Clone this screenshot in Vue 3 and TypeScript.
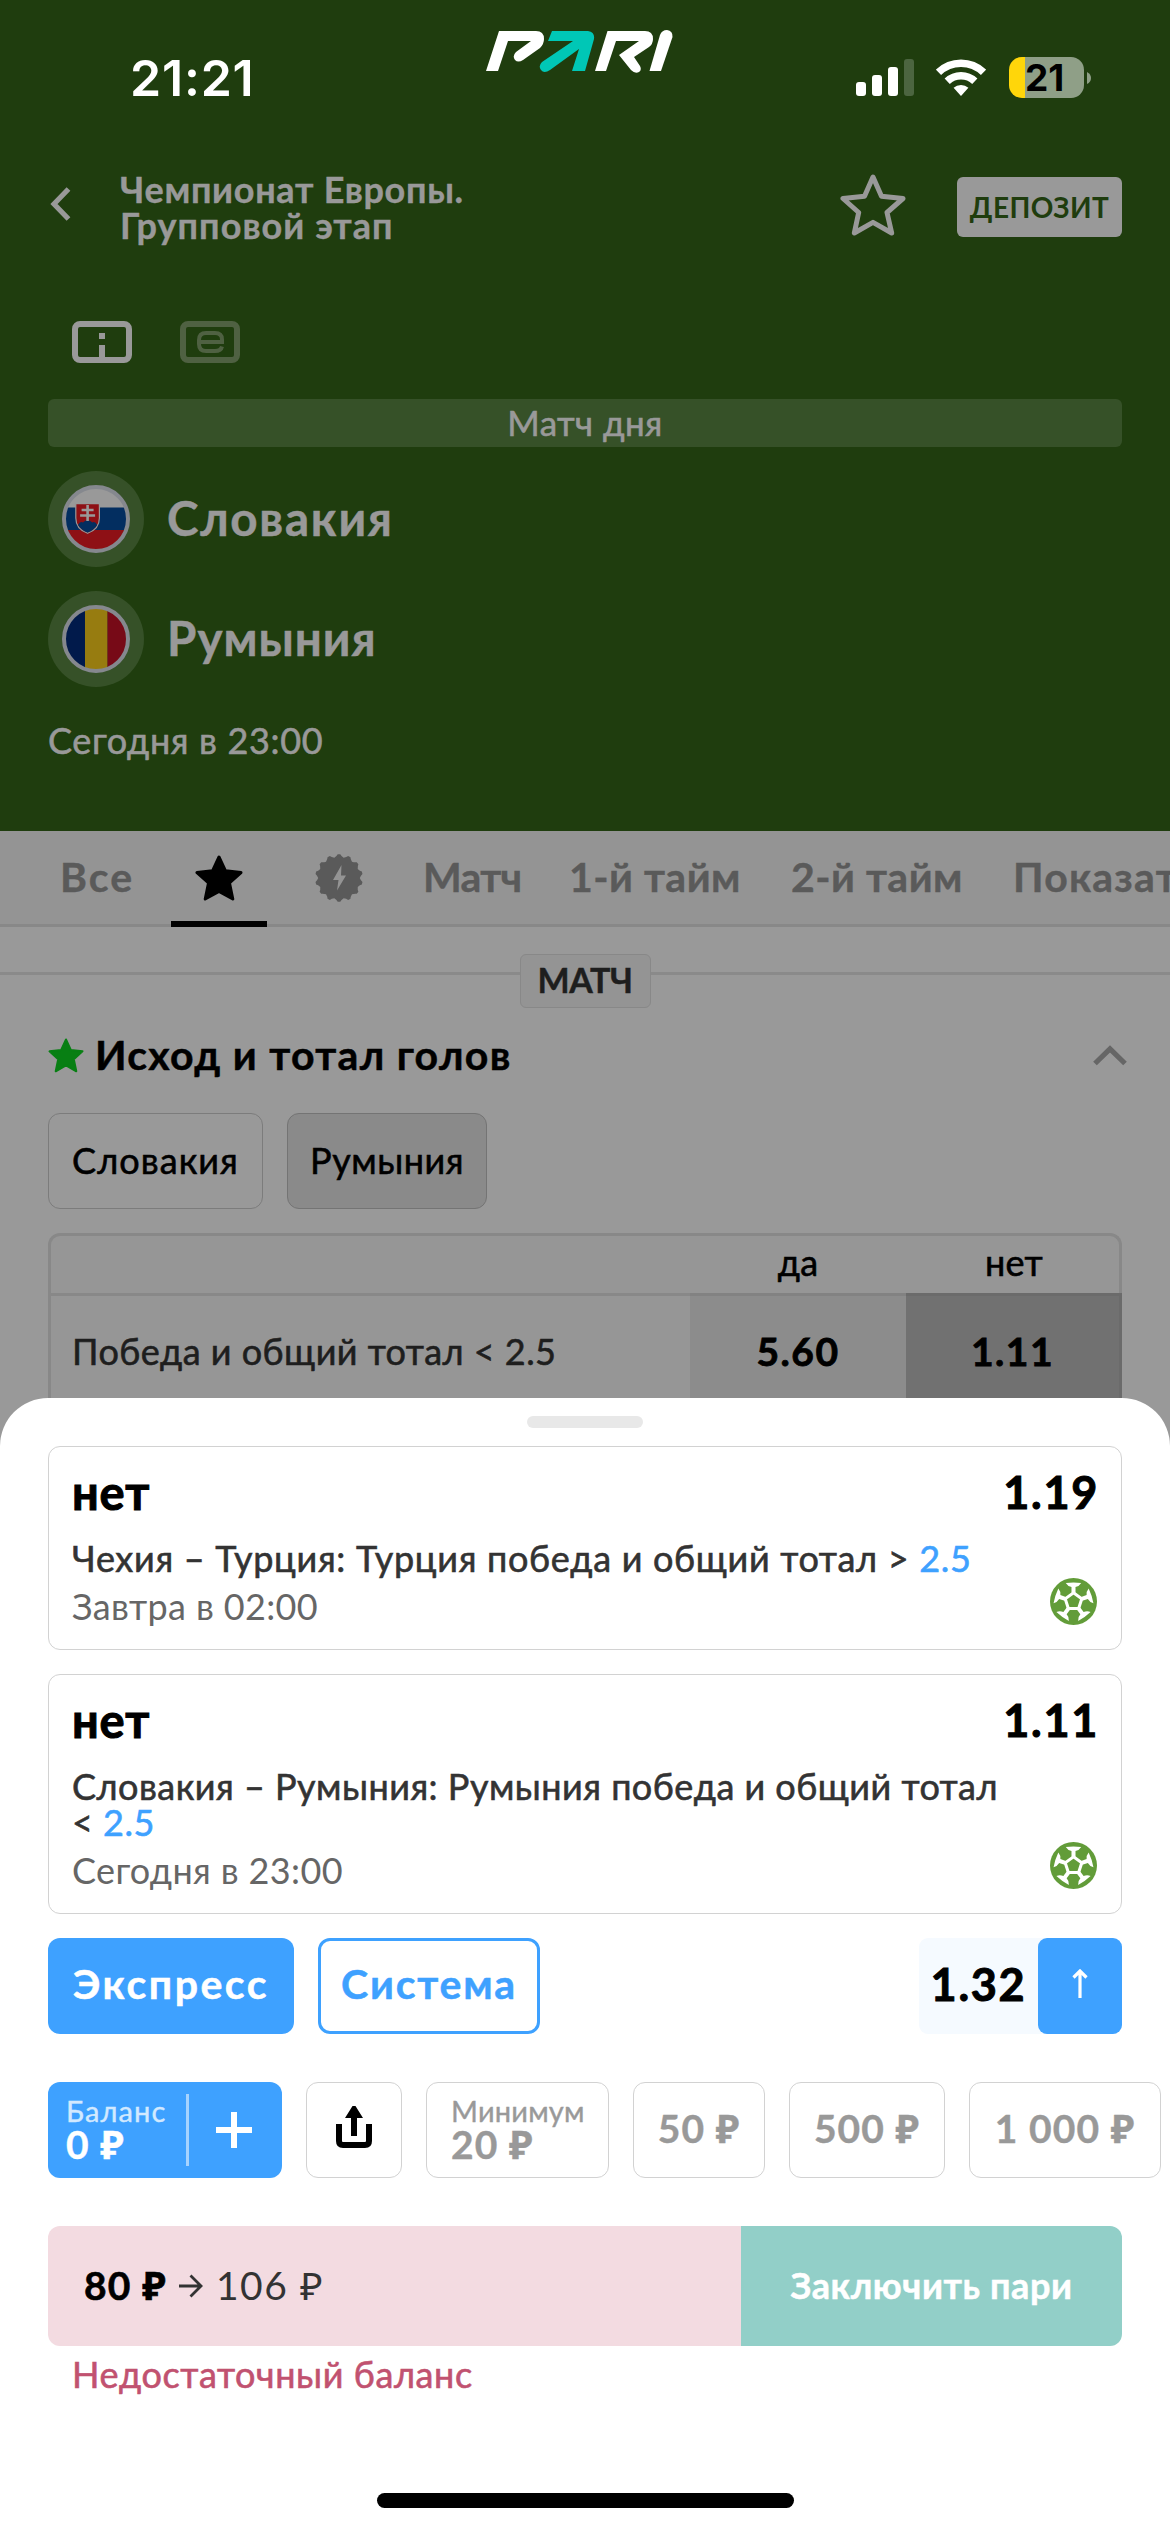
<script setup lang="ts">
interface Tab {
  id: string
  label?: string
  icon?: 'star' | 'boost'
  active?: boolean
}
interface Bet {
  id: string
  outcome: string
  odds: string
  event: string
  total: string
  time: string
}

const tabs: Tab[] = [
  { id: 'all', label: 'Все' },
  { id: 'favorite', icon: 'star', active: true },
  { id: 'boost', icon: 'boost' },
  { id: 'match', label: 'Матч' },
  { id: 'half1', label: '1-й тайм' },
  { id: 'half2', label: '2-й тайм' },
  { id: 'stats', label: 'Показатели' },
]

const bets: Bet[] = [
  { id: 'cze-tur', outcome: 'нет', odds: '1.19', event: 'Чехия – Турция: Турция победа и общий тотал >', total: '2.5', time: 'Завтра в 02:00' },
  { id: 'svk-rou', outcome: 'нет', odds: '1.11', event: 'Словакия – Румыния: Румыния победа и общий тотал <', total: '2.5', time: 'Сегодня в 23:00' },
]

const stakes = [
  { value: '50 ₽', cls: 's50' },
  { value: '500 ₽', cls: 's500' },
  { value: '1 000 ₽', cls: 's1000' },
]

const spokes = [0, 72, 144, 216, 288]

// Scalloped outline of the boost badge
const badgePath = (() => {
  const teeth = 14
  const parts: string[] = []
  for (let i = 0; i < teeth; i++) {
    const point = (angle: number, radius: number) =>
      `${(24 + radius * Math.sin(angle)).toFixed(2)} ${(24 - radius * Math.cos(angle)).toFixed(2)}`
    const step = (Math.PI * 2) / teeth
    const a = i * step
    if (i === 0) parts.push(`M${point(a - step / 2, 20.8)}`)
    parts.push(`Q${point(a - step * 0.22, 22)} ${point(a - step * 0.12, 23.8)}`)
    parts.push(`L${point(a + step * 0.12, 23.8)}`)
    parts.push(`Q${point(a + step * 0.22, 22)} ${point(a + step / 2, 20.8)}`)
  }
  return parts.join('') + 'Z'
})()
</script>

<template>
  <div class="screen">
    <header class="header">
      <div class="status">
        <span class="clock">21:21</span>
        <svg class="logo" viewBox="0 0 188 44">
          <path fill="#fff" d="M0 42 13 2h37q8 0 8 8 0 5-4 9L37 31q-5 3-8 0-3-4 1-8L45 12H22L12 42z" />
          <path fill="#00c7b6" d="M66 2h36q7 1 6 8L99 42H86l7-22-29 21q-6 4-9 0-3-4 1-8l31-21H62z" />
          <path fill="#fff" d="M109 42 121.500 2H159q8 0 8 8 0 5-4 8l-15 10 6 9q2 4-1 6-4 2-8-2l-12-15L153 12h-23l-10 30z" />
          <path fill="#fff" d="M163.500 42 174 6q2-5 7-5 6 1 5.500 7L175 42z" />
        </svg>
        <div class="indicators">
          <svg class="signal" viewBox="0 0 58 37">
            <rect x="0" y="23" width="10" height="14" rx="3" fill="#fff" />
            <rect x="16" y="16" width="10" height="21" rx="3" fill="#fff" />
            <rect x="32" y="8" width="10" height="29" rx="3" fill="#fff" />
            <rect x="48" y="0" width="10" height="37" rx="3" fill="#4c6540" />
          </svg>
          <svg class="wifi" viewBox="0 0 50 37">
            <g fill="none" stroke="#fff" stroke-width="7.500">
              <path d="M2.500 13.300a32.500 32.500 0 0 1 45 0" />
              <path d="M11.200 22.300a20 20 0 0 1 27.600 0" />
            </g>
            <path fill="#fff" d="M17.600 28.800a11 11 0 0 1 14.800 0L25 37z" />
          </svg>
          <div class="battery"><span>21</span></div>
          <svg class="nub" viewBox="0 0 4 12"><path d="M0 0q4 2 4 6t-4 6z" fill="#8f9f87" /></svg>
        </div>
      </div>

      <div class="nav">
        <svg class="back" viewBox="0 0 21 34"><path d="M18.500 2 4 17l14.500 15" fill="none" stroke="#999" stroke-width="5.200" /></svg>
        <h1 class="league"><span class="l1">Чемпионат Европы.</span><br /><span class="l2">Групповой этап</span></h1>
        <svg class="fav" viewBox="0 0 66 62">
          <path d="M33 3 41.500 22.300 63 24.500 47 38.500 51.700 59 33 48.300 14.300 59 18.700 38.500 3 24.500 24.500 22.300z" fill="none" stroke="#999" stroke-width="5" stroke-linejoin="round" />
        </svg>
        <button class="deposit">ДЕПОЗИТ</button>
      </div>

      <div class="modes">
        <svg viewBox="0 0 60 42">
          <rect x="3" y="3" width="54" height="36" rx="5" fill="none" stroke="#999" stroke-width="6" />
          <path d="M27 12h6v6h-6zM27 24h6v13h-6z" fill="#999" />
        </svg>
        <svg viewBox="0 0 60 42">
          <rect x="3" y="3" width="54" height="36" rx="5" fill="none" stroke="#4f6142" stroke-width="6" />
          <path d="M19 21h23v-2.500q0-6.500-7-6.500h-9q-7 0-7 7v4q0 7 7 7h9q6 0 7-4.500" fill="none" stroke="#4f6142" stroke-width="4" />
        </svg>
      </div>

      <div class="banner">Матч дня</div>

      <div class="team">
        <div class="crest">
          <svg viewBox="0 0 68 68">
            <clipPath id="round"><circle cx="34" cy="34" r="31" /></clipPath>
            <g clip-path="url(#round)">
              <path fill="#999" d="M0 0h68v23H0z" />
              <path fill="#032e60" d="M0 22.500h68V45H0z" />
              <path fill="#8e1015" d="M0 45h68v23H0z" />
              <path fill="#8e1015" stroke="#999" stroke-width="1.200" d="M13.800 18.700h23.600V33q0 11-11.800 15.300Q13.800 44 13.800 33z" />
              <path fill="#032e60" d="M16 40q2-4 5-2.500 4.600-5 9.200 0 3-1.500 5 2.500-3 5-9.600 7.600Q19 45 16 40z" />
              <path stroke="#999" stroke-width="2.600" d="M25.600 20v16M19.600 25h12M18.100 30.500h15" />
            </g>
            <circle cx="34" cy="34" r="32" fill="none" stroke="#85888e" stroke-width="4" />
          </svg>
        </div>
        <span class="tn1">Словакия</span>
      </div>
      <div class="team">
        <div class="crest">
          <svg viewBox="0 0 68 68">
            <g clip-path="url(#round)">
              <path fill="#011a4b" d="M0 0h23v68H0z" />
              <path fill="#977c10" d="M23 0h22.500v68H23z" />
              <path fill="#770a17" d="M45.500 0H68v68H45.500z" />
            </g>
            <circle cx="34" cy="34" r="32" fill="none" stroke="#85888e" stroke-width="4" />
          </svg>
        </div>
        <span class="tn2">Румыния</span>
      </div>
      <div class="kickoff">Сегодня в 23:00</div>
    </header>

    <nav class="tabs">
      <div v-for="t in tabs" :key="t.id" class="tab" :class="[t.id, { active: t.active }]">
        <template v-if="t.label">{{ t.label }}</template>
        <svg v-else-if="t.icon === 'star'" class="tab-star" viewBox="0 0 48 46">
          <path d="M24 2 30.500 15.800 46 17.600 34.500 28 37.800 44 24 36.500 10.200 44 13.500 28 2 17.600 17.500 15.800z" fill="#000" stroke="#000" stroke-width="3" stroke-linejoin="round" />
        </svg>
        <svg v-else class="tab-boost" viewBox="0 0 48 48">
          <path :d="badgePath" fill="#5a5a5a" />
          <path d="M26.500 11 18 26h5.500l-1.500 10.500L31 21.500h-5z" fill="#949494" />
        </svg>
      </div>
    </nav>

    <main class="market">
      <div class="divider"><span>МАТЧ</span></div>
      <div class="market-head">
        <svg class="green-star" viewBox="0 0 36 35">
          <path d="M18 1.500 22.800 12 34.500 13.300 25.800 21.200 28.300 33.300 18 27.300 7.700 33.300 10.200 21.200 1.500 13.300 13.200 12z" fill="#087f13" stroke="#087f13" stroke-width="2" stroke-linejoin="round" />
        </svg>
        <h2>Исход и тотал голов</h2>
        <svg class="collapse" viewBox="0 0 34 21"><path d="M2 18.500 17 3.800 32 18.500" fill="none" stroke="#666" stroke-width="5.200" /></svg>
      </div>
      <div class="chips">
        <div class="chip c1">Словакия</div>
        <div class="chip c2 selected">Румыния</div>
      </div>
      <div class="table">
        <div class="thead"><span></span><span>да</span><span>нет</span></div>
        <div class="trow">
          <span class="label">Победа и общий тотал &lt; 2.5</span>
          <span class="odd">5.60</span>
          <span class="odd picked">1.11</span>
        </div>
      </div>
    </main>

    <section class="sheet">
      <div class="handle"></div>
      <article v-for="b in bets" :key="b.id" class="card" :class="b.id">
        <div class="card-top"><span class="outcome">{{ b.outcome }}</span><span class="odds">{{ b.odds }}</span></div>
        <div class="card-body">
          <div class="card-text">
            <div class="event">{{ b.event }} <em>{{ b.total }}</em></div>
            <div class="when">{{ b.time }}</div>
          </div>
          <svg class="ball" viewBox="0 0 140 140">
            <circle cx="70" cy="70" r="70" fill="#629c39" />
            <path d="M70 44 94.700 62 85.300 91 54.700 91 45.300 62z" fill="none" stroke="#fff" stroke-width="9" />
            <g v-for="a in spokes" :key="a" :transform="`rotate(${a} 70 70)`" fill="#fff">
              <path d="M47 15q23-3 46 0-6 10-17 12v17H64V27q-11-2-17-12z" />
            </g>
          </svg>
        </div>
      </article>

      <div class="modes-row">
        <button class="mode express">Экспресс</button>
        <button class="mode system">Система</button>
        <div class="total">
          <span class="coef">1.32</span>
          <button class="expand">
            <svg viewBox="0 0 16 30"><path d="M8 29V3M1.500 8.500 8 2l6.500 6.500" fill="none" stroke="#fff" stroke-width="3.200" /></svg>
          </button>
        </div>
      </div>

      <div class="stakes">
        <div class="balance">
          <div class="balance-text"><small>Баланс</small><b>0 ₽</b></div>
          <i class="bar"></i>
          <svg class="plus" viewBox="0 0 36 36"><path d="M18 0v36M0 18h36" stroke="#fff" stroke-width="6" /></svg>
        </div>
        <button class="stake share">
          <svg viewBox="0 0 36 42">
            <path d="M3 18v17q0 4 4 4h22q4 0 4-4V18" fill="none" stroke="#000" stroke-width="6" />
            <path d="M16.500 0h3L27 12h-6v18h-6V12H9z" fill="#000" />
          </svg>
        </button>
        <button class="stake min"><small>Минимум</small><b>20 ₽</b></button>
        <button v-for="s in stakes" :key="s.value" class="stake" :class="s.cls"><b>{{ s.value }}</b></button>
      </div>

      <div class="submit">
        <div class="amount">
          <b>80 ₽</b>
          <svg viewBox="0 0 24 24"><path d="M0 12h22M11.500 1.500 22 12 11.500 22.500" fill="none" stroke="#333" stroke-width="2.800" /></svg>
          <span>106 ₽</span>
        </div>
        <button class="place">Заключить пари</button>
      </div>
      <div class="error">Недостаточный баланс</div>
      <div class="home"></div>
    </section>
  </div>
</template>

<style>
body { margin: 0; }
</style>

<style scoped>
.screen {
  position: relative;
  width: 1170px;
  height: 2532px;
  overflow: hidden;
  background: #999;
  font-family: Lato, "Noto Sans", sans-serif;
  font-size: 36px;
  line-height: 36px;
  color: #000;
}
* { box-sizing: border-box; }
svg { display: block; flex: none; }
button { font: inherit; border: 0; padding: 0; margin: 0; background: none; letter-spacing: inherit; }
h1, h2 { margin: 0; font-weight: 700; }
b { font-weight: 700; }

.header { height: 831px; background: #1f3d0e; color: #999; padding: 0 48px; }
.status { display: grid; grid-template-columns: 438px 188px 1fr; height: 141px; margin-right: -48px; }
.clock { font: 600 50px/60px Inter, sans-serif; letter-spacing: .8px; color: #fff; padding: 48px 0 0 82px; }
.logo { width: 188px; height: 44px; margin-top: 29px; }
.indicators { display: flex; align-items: center; height: 41px; margin-top: 57px; padding-left: 182px; }
.signal { width: 58px; height: 37px; }
.wifi { width: 50px; height: 37px; margin: 0 23px 0 22px; }
.battery { width: 75px; height: 41px; border-radius: 13px; background: linear-gradient(90deg, #ffd60a 16px, #8f9f87 16px); color: #000; font: 700 37px/41px Inter, sans-serif; padding-left: 16px; }
.nub { width: 4px; height: 12px; margin-left: 3px; }

.nav { display: flex; align-items: center; height: 132px; }
.back { width: 21px; height: 34px; margin: 0 49px 7px 2px; }
.league { flex: 1; font-size: 36px; line-height: 36px; -webkit-text-stroke: .4px; }
.l1 { letter-spacing: .7px; }
.l2 { letter-spacing: 1.070px; }
.fav { width: 66px; height: 62px; margin: 0 51px 4px 0; }
.deposit { width: 165px; height: 60px; border-radius: 6px; background: #999; color: #1f3d0e; font-weight: 700; font-size: 28px; line-height: 58px; letter-spacing: .4px; }

.modes { display: flex; gap: 48px; padding: 48px 24px 36px; }
.modes svg { width: 60px; height: 42px; }
.banner { height: 48px; border-radius: 6px; background: #365128; text-align: center; font-size: 35px; line-height: 46px; letter-spacing: .4px; -webkit-text-stroke: .6px; }
.team { display: flex; align-items: center; gap: 23px; margin-top: 24px; font-weight: 700; font-size: 47.500px; line-height: 60px; -webkit-text-stroke: .5px; }
.tn1 { letter-spacing: 1.750px; margin-bottom: 2px; }
.tn2 { letter-spacing: 1px; margin-bottom: 2px; }
.crest { display: grid; place-items: center; width: 96px; height: 96px; border-radius: 50%; background: #365128; }
.crest svg { width: 68px; height: 68px; }
.kickoff { margin-top: 29px; line-height: 48px; letter-spacing: .65px; -webkit-text-stroke: .6px; }

.tabs { display: grid; grid-template-columns: 111px 96px 156px 146px 222px 222px max-content; height: 96px; padding-left: 60px; background: #949494; border-bottom: 3px solid #888; color: #5a5a5a; font-weight: 700; font-size: 41px; line-height: 92px; letter-spacing: .5px; -webkit-text-stroke: .4px; }
.tab { position: relative; }
.all { letter-spacing: 2.100px; }
.match { letter-spacing: -.7px; }
.stats { letter-spacing: 1.200px; }
.favorite, .boost { display: grid; place-items: center; }
.boost { padding-right: 12px; }
.active::after { content: ""; position: absolute; left: 0; right: 0; bottom: -3px; height: 6px; background: #000; }
.tab-star { width: 48px; height: 46px; }
.tab-boost { width: 48px; height: 48px; }

.market { padding: 0 48px; }
.divider { position: relative; display: flex; justify-content: center; margin: 0 -48px; padding-top: 27px; }
.divider::before { content: ""; position: absolute; left: 0; right: 0; top: 45px; height: 3px; background: #8a8a8a; }
.divider span { position: relative; width: 131px; height: 54px; border: 1px solid #888; border-radius: 6px; background: #949494; color: #1e1e1e; text-align: center; font-weight: 700; font-size: 34px; line-height: 50px; letter-spacing: -.4px; -webkit-text-stroke: .4px; }
.market-head { display: flex; align-items: center; height: 64px; margin: 15px -5px 26px 0; }
.green-star { width: 36px; height: 35px; }
.market-head h2 { flex: 1; margin-left: 11px; font-size: 41px; line-height: 62px; letter-spacing: 1.300px; -webkit-text-stroke: .5px; }
.collapse { width: 34px; height: 21px; }
.chips { display: flex; gap: 24px; }
.chip { height: 96px; border: 1px solid #7c7c7c; border-radius: 12px; text-align: center; line-height: 92px; -webkit-text-stroke: .6px; }
.c1 { width: 215px; letter-spacing: 1.060px; }
.c2 { width: 200px; letter-spacing: .52px; }
.selected { background: #8a8a8a; border-color: #747474; }
.table { margin-top: 24px; }
.thead, .trow { display: grid; grid-template-columns: 642px 216px 216px; }
.thead { height: 60px; border: 3px solid #888; border-bottom: 0; border-radius: 12px 12px 0 0; background: #969696; text-align: center; line-height: 52px; letter-spacing: .3px; -webkit-text-stroke: .6px; }
.thead span { margin-left: -3px; margin-right: 3px; }
.trow > span { height: 114px; border-top: 3px solid #888; line-height: 110px; }
.trow .label { border-left: 3px solid #888; background: #969696; padding-left: 21px; color: #1e1e1e; letter-spacing: .46px; -webkit-text-stroke: .6px; }
.trow .odd { background: #8c8c8c; border-color: #828282; text-align: center; font-weight: 700; font-size: 39px; letter-spacing: 1.500px; -webkit-text-stroke: .8px; }
.trow .picked { background: #717171; border-color: #6b6b6b; border-right: 3px solid #6b6b6b; }

.sheet { position: absolute; left: 0; right: 0; top: 1398px; bottom: 0; display: flex; flex-direction: column; padding: 18px 48px 24px; border-radius: 48px 48px 0 0; background: #fff; }
.handle { flex: none; width: 116px; height: 12px; margin: 0 auto 18px; border-radius: 6px; background: #e8e8e8; }
.card { border: 1px solid #d2d2d2; border-radius: 12px; padding: 16px 24px 24px 23px; margin-bottom: 24px; }
.card-top { display: flex; justify-content: space-between; font-weight: 700; font-size: 45px; line-height: 58px; height: 60px; -webkit-text-stroke: 1px; }
.outcome { font-size: 47px; letter-spacing: .8px; }
.odds { letter-spacing: 1.700px; margin-right: -2px; }
.card-body { display: flex; justify-content: space-between; align-items: flex-end; margin-top: 17px; }
.card-text { width: 945px; }
.event { color: #333; -webkit-text-stroke: .6px; }
.cze-tur .event { letter-spacing: .68px; }
.svk-rou .event { letter-spacing: .48px; }
.event em { font-style: normal; color: #3ea1ff; }
.when { margin-top: 12px; height: 37px; color: #666; letter-spacing: .36px; }
.ball { width: 47px; height: 47px; }

.modes-row { display: flex; }
.mode { height: 96px; border-radius: 12px; font-weight: 700; font-size: 41px; -webkit-text-stroke: .5px; }
.express { width: 246px; background: #3ea1ff; color: #fff; letter-spacing: 2.500px; padding-bottom: 4px; }
.system { width: 222px; margin-left: 24px; border: 3px solid #3ea1ff; color: #3ea1ff; letter-spacing: 1.800px; padding-bottom: 4px; }
.total { display: flex; margin-left: auto; border-radius: 9px; background: #f5faff; }
.coef { width: 119px; text-align: center; font-weight: 700; font-size: 45px; line-height: 92px; letter-spacing: 1.700px; -webkit-text-stroke: 1px; }
.expand { display: grid; place-items: center; width: 84px; height: 96px; border-radius: 9px; background: #3ea1ff; }
.expand svg { width: 16px; height: 30px; margin-bottom: 4px; }

.stakes { display: flex; gap: 24px; margin: 48px -48px 0 0; }
.balance { flex: none; display: flex; align-items: center; width: 234px; height: 96px; border-radius: 12px; background: #3ea1ff; color: #fff; padding-left: 18px; }
small, .stakes b { display: block; }
small { font-size: 29px; line-height: 33px; -webkit-text-stroke: .4px; }
.stakes b { font-size: 39px; line-height: 35px; letter-spacing: 1.100px; -webkit-text-stroke: .4px; }
.balance-text { width: 120px; margin-bottom: 4px; }
.balance small { letter-spacing: 1.100px; color: #d2e9ff; }
.bar { width: 3px; height: 72px; background: #a6d3ff; }
.plus { width: 36px; height: 36px; margin-left: 27px; }
.stake { flex: none; height: 96px; border: 1px solid #d2d2d2; border-radius: 12px; color: #999; text-align: center; padding-bottom: 4px; }
.share { display: grid; place-items: center; width: 96px; padding: 0 0 6px; }
.share svg { width: 36px; height: 42px; }
.min { width: 183px; text-align: left; padding-left: 24px; }
.min small { letter-spacing: .2px; }
.s50 { width: 132px; }
.s500 { width: 156px; }
.s1000 { width: 192px; }

.submit { display: flex; height: 120px; margin-top: 48px; border-radius: 12px; overflow: hidden; flex: none; }
.amount { display: flex; align-items: center; width: 693px; background: #f3dbe1; padding: 0 0 3px 36px; font-size: 39px; letter-spacing: 1.200px; }
.amount b { -webkit-text-stroke: .6px; }
.amount svg { width: 24px; height: 24px; margin: 3px 13px 0 12px; }
.amount span { color: #333; letter-spacing: 1.540px; }
.place { width: 381px; background: #92cfc8; color: #fff; font-weight: 700; letter-spacing: .6px; padding-bottom: 3px; -webkit-text-stroke: .5px; }
.error { margin: 10px 24px 0; line-height: 36px; color: #c15270; letter-spacing: .6px; -webkit-text-stroke: .6px; }
.home { flex: none; width: 417px; height: 15px; margin: auto auto 0; border-radius: 8px; background: #000; }
</style>
